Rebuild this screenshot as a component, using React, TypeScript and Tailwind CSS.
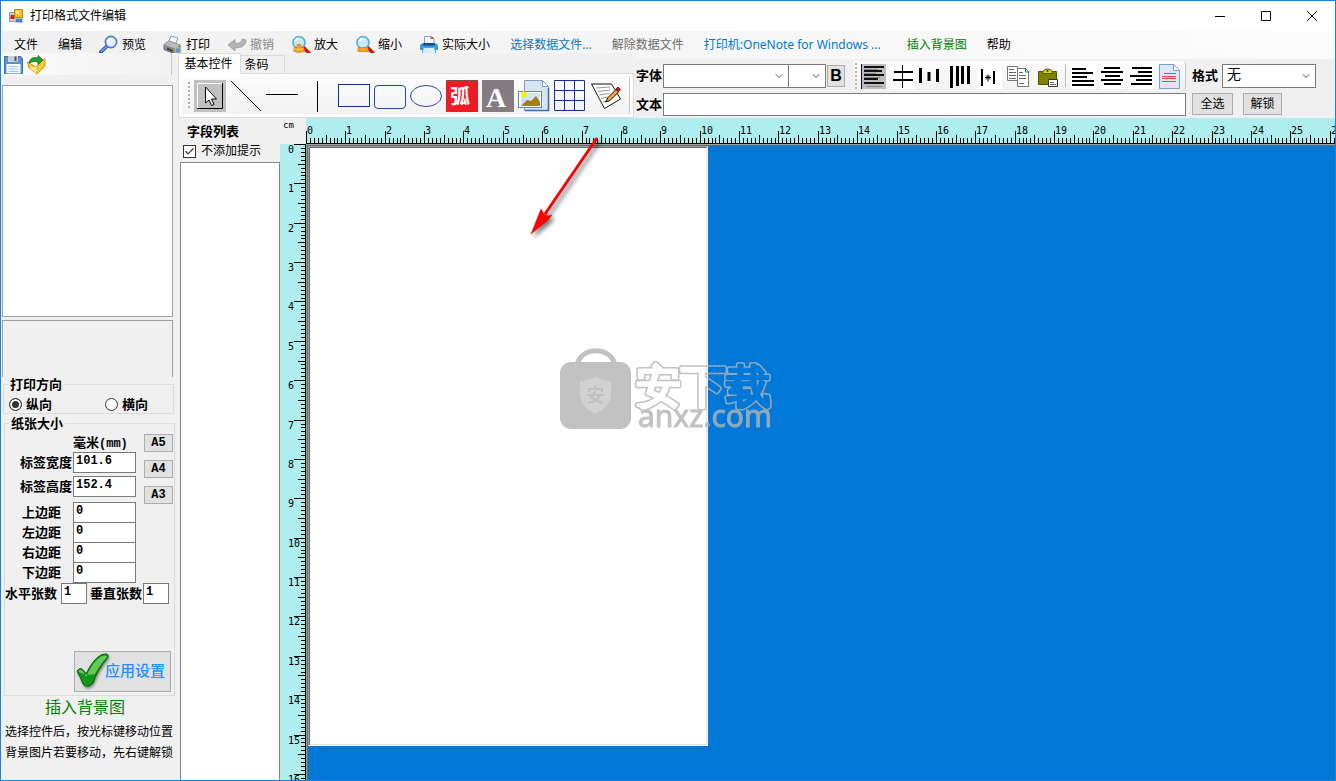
import { useLayoutEffect, useRef, useState } from 'react'
import type { ReactNode } from 'react'
import { Check, ChevronDown } from 'lucide-react'
import clsx from 'clsx'

const CM = 39.37

/* ---------- menu icons ---------- */

function AppIcon() {
  return (
    <svg width="15" height="15" viewBox="0 0 15 15">
      <rect x="0.5" y="3.5" width="7" height="9" fill="#d0d0d0" stroke="#9a9a9a" />
      <rect x="1.5" y="6" width="4" height="4" fill="#c22a1c" />
      <rect x="5.5" y="0.5" width="8" height="8" fill="#f7c325" stroke="#b98a1c" />
      <rect x="7" y="2" width="3" height="3" fill="#fdeb9c" />
      <rect x="6.5" y="9.5" width="7" height="4" fill="#3f7fe0" stroke="#b9c4d6" />
    </svg>
  )
}

function PreviewIcon() {
  return (
    <svg width="20" height="20" viewBox="0 0 20 20">
      <path d="M7.5 11.5 1.5 17.5" stroke="#2b55b5" strokeWidth="3.6" strokeLinecap="round" />
      <path d="M7.5 11.5 2.5 16.5" stroke="#86a9ea" strokeWidth="1.4" strokeLinecap="round" />
      <circle cx="12" cy="7" r="5.6" fill="#e3effc" stroke="#4a78cc" strokeWidth="1.6" />
      <path d="M8.8 6.5a3.6 3.6 0 0 1 3.2-2.8" stroke="#fff" strokeWidth="1.6" fill="none" />
    </svg>
  )
}

function PrinterIcon() {
  return (
    <svg width="20" height="20" viewBox="0 0 20 20">
      <path d="M5 8 8 1l7 2-3 7z" fill="#f2f6fb" stroke="#8ba0b8" />
      <path d="M1 9.5 6 6l11 4v6l-5 3-11-4.5z" fill="#8c8c8c" stroke="#666" />
      <path d="M1 9.5 6 6l11 4-5 3.5z" fill="#bcbcbc" />
      <path d="M4 12.5l6 2.5v2l-6-2.200z" fill="#444" />
      <circle cx="15" cy="15.5" r="3" fill="#5b95dc" stroke="#d7c84c" />
    </svg>
  )
}

function UndoIcon() {
  return (
    <svg width="20" height="20" viewBox="0 0 20 20">
      <path d="M1 10 8 4.500V8c3.500.6 6.500-.4 7.200-4L19 5c.3 5.500-4.500 8.300-11 7.700V16z" fill="#b4b4b4" stroke="#9d9d9d" strokeWidth=".8" />
    </svg>
  )
}

function LensIcon({ plus }: { plus?: boolean }) {
  return (
    <svg width="20" height="20" viewBox="0 0 20 20">
      <path d="M12 12l6 6" stroke="#c8200f" strokeWidth="3.6" strokeLinecap="round" />
      <circle cx="8" cy="7.5" r="6" fill="#c5ebfb" stroke="#58aede" strokeWidth="1.7" />
      <path d="M4.5 6.5A4 4 0 0 1 9 3.8" stroke="#fff" strokeWidth="1.8" fill="none" />
      <path d="M3 12.5h10v4H3z" fill="#f9a01b" stroke="#d97808" strokeWidth=".7" />
      {plus && <path d="M6 9.5h4v10H6z" fill="#f9a01b" stroke="#d97808" strokeWidth=".7" />}
      {plus && <path d="M4 13.2h8v2.600H4z" fill="#fbb53f" />}
    </svg>
  )
}

function ActualSizeIcon() {
  return (
    <svg width="20" height="20" viewBox="0 0 20 20">
      <path d="M5.5 9V1.500h7L15 4v5z" fill="#eef6fd" stroke="#7fa7c8" />
      <rect x="11.5" y="2" width="3" height="2" fill="#e44" />
      <path d="M1 11.5C1 9 2.500 8.500 4 8.500h12c1.500 0 3 .5 3 3V15H1z" fill="#3a9ad8" />
      <rect x="4" y="8" width="12" height="2.5" rx="1" fill="#134f7d" />
      <path d="M4.5 12.5h11l1.500 6H3z" fill="#d9eefa" stroke="#5ba0cf" />
    </svg>
  )
}

function SaveIcon() {
  return (
    <svg width="19" height="20" viewBox="0 0 19 20">
      <path d="M.5 1.500h16.500l1.500 2v15H.5z" fill="#5a92cd" stroke="#3c6ea8" />
      <rect x="4" y="1" width="10" height="6" fill="#c9ced4" />
      <rect x="10.5" y="1.5" width="2" height="4.5" fill="#4d5965" />
      <rect x="2.5" y="9" width="14" height="9.5" fill="#f5fafe" />
      <path d="M4.5 11.500h10M4.500 14h10M4.500 16.500h10" stroke="#9cc2e6" />
    </svg>
  )
}

function OpenIcon() {
  return (
    <svg width="19" height="20" viewBox="0 0 19 20">
      <path d="M.5 7 9 12l8-8 1 0 0 7L10 19 2 13z" fill="#f3c93a" stroke="#c39a1c" />
      <path d="M2 12.500 9.500 12v6.500z" fill="#fbe88a" />
      <path d="M2 8C3 3 7 1.500 11 3V.5L16 5l-5 4.500V7C8 6 5.500 6.500 2 8z" fill="#2a9a2e" stroke="#156c1a" strokeWidth=".8" />
    </svg>
  )
}

/* ---------- shape toolbar ---------- */

const shapeTools: { name: string; icon: ReactNode }[] = [
  {
    name: '选择',
    icon: (
      <>
        <rect width="32" height="32" fill="#c0c0c0" />
        <path d="M3.5 28V3.500H28" stroke="#fff" fill="none" />
        <path d="M3 28.500h25.500V3" stroke="#000" fill="none" />
        <path d="M11.500 7v16l3.500-3 2.500 5.500 2.500-1-2.500-5.500h5z" fill="#fff" stroke="#000" />
      </>
    ),
  },
  { name: '斜线', icon: <path d="M1 1l30 30" stroke="#000" /> },
  { name: '横线', icon: <path d="M0 14.500h32" stroke="#000" /> },
  { name: '竖线', icon: <path d="M15.500 1v31" stroke="#000" /> },
  { name: '矩形', icon: <rect x=".5" y="4.5" width="31" height="22" fill="none" stroke="#10309a" /> },
  { name: '圆角矩形', icon: <rect x=".5" y="5.5" width="31" height="23" rx="3.5" fill="none" stroke="#2b479c" /> },
  { name: '椭圆', icon: <ellipse cx="16" cy="16" rx="15.5" ry="10.5" fill="none" stroke="#2b479c" /> },
  {
    name: '弧形文字',
    icon: (
      <>
        <rect width="32" height="32" fill="#ed1c24" />
        <path d="M0 1h32" stroke="#8a4a3a" strokeWidth="2" />
        <text x="14" y="24" fontSize="20" fontWeight="700" textAnchor="middle" fill="#fff" className="font-['Noto_Sans_CJK_SC',sans-serif]">弧</text>
      </>
    ),
  },
  {
    name: '文字',
    icon: (
      <>
        <rect width="32" height="32" fill="#847c80" />
        <text x="14" y="27" fontSize="28" fontWeight="700" textAnchor="middle" fill="#fff" className="font-['Liberation_Serif',serif]">A</text>
      </>
    ),
  },
  {
    name: '图片',
    icon: (
      <>
        <path d="M6.500.5h18l6 6v24h-24z" fill="#d6e4f4" stroke="#7f9cc4" />
        <path d="M24.500.5v6h6z" fill="#fff" stroke="#7f9cc4" />
        <path d="M30.500 8v22.500H7" stroke="#49699a" strokeWidth="1.6" fill="none" />
        <rect x=".5" y="11.5" width="23" height="16" fill="#fff" stroke="#5f86ba" />
        <rect x="3" y="13" width="19" height="13" fill="#cfe6fa" />
        <path d="M3 26l6-6 4 1 5-5 4 6v4z" fill="#a57f12" />
        <circle cx="6" cy="14.500" r="3" fill="#fff200" />
      </>
    ),
  },
  {
    name: '表格',
    icon: <path d="M.5.5h30v30H.5zM10.500.5v30M20.500.5v30M.5 10.500h30M.5 20.500h30" fill="none" stroke="#10309a" />,
  },
  {
    name: '记事',
    icon: (
      <>
        <path d="M1.500 4h20l9 15-16 9.500z" fill="#fff" stroke="#111" strokeLinejoin="round" />
        <path d="M6 8l14-1M8 11.500l12-1.500M9.500 15l10-1.500M11 18.500l7-1.500M13 22l6-1.500" stroke="#999" />
        <path d="M15.500 22l2.500-4.500L26 9.500l2.500 2.500L20 20.500z" fill="#f0a63a" stroke="#111" />
        <path d="M26 9l2-2 2.500 2.500-2 2z" fill="#d21f1f" stroke="#8a1010" />
      </>
    ),
  },
]

/* ---------- align toolbar ---------- */

const alignTools: { name: string; icon: ReactNode; white?: boolean }[] = [
  {
    name: '左对齐控件',
    icon: (
      <>
        <rect width="25" height="25" fill="#bdbdbd" />
        <path d="M.5 0v25" stroke="#00008b" />
        <path d="M3 3h20M3 7h18M3 11h20M3 15h14M3 19h20" stroke="#111" strokeWidth="2" />
        <path d="M3 5.500h14M3 9.500h12M3 13.500h16M5 22.500h16" stroke="#888" />
      </>
    ),
  },
  {
    name: '水平居中',
    white: true,
    icon: (
      <>
        <path d="M12.500 1v23" stroke="#000" />
        <path d="M4 8h19M3 16h20" stroke="#000" strokeWidth="2" />
      </>
    ),
  },
  { name: '水平等距', icon: <path d="M1.500 4v15M10 8v9M18.500 5v13" stroke="#000" strokeWidth="3" /> },
  { name: '垂直等距', icon: <path d="M3.500 2v22M9.500 2v20M14.500 2v18M20.500 2v18" stroke="#000" strokeWidth="3" /> },
  {
    name: '间距',
    white: true,
    icon: (
      <>
        <path d="M5 5v17M17 7v13" stroke="#000" strokeWidth="2" />
        <path d="M8 13.500h6M11 10.500v7M9 11.500l4 4M13 11.500l-4 4" stroke="#000" />
      </>
    ),
  },
  {
    name: '复制',
    icon: (
      <>
        <path d="M1.500 2.500h10v14h-10zM11.500 4.500h8l3 3v15h-11z" fill="#fff" stroke="#777" />
        <path d="M3 5.500h5M3 8.500h7M3 11.500h7M3 14.500h7M13 8.500h4M13 11.500h7M13 14.500h7M13 19.500h5" stroke="#666" />
        <path d="M19.500 4v4h4" fill="none" stroke="#0a7a7a" />
      </>
    ),
  },
  {
    name: '粘贴',
    icon: (
      <>
        <path d="M3.500 7.500h18v13h-18z" fill="#808000" stroke="#555500" />
        <path d="M7.500 9.500c0-6 10-6 10 0z" fill="#e5d800" stroke="#444" />
        <circle cx="12.500" cy="7" r="1" fill="#222" />
        <path d="M13.500 15.500h9v7h-9z" fill="#fff" stroke="#333" />
        <path d="M15 18.500h4M15 20.500h6" stroke="#666" />
      </>
    ),
  },
]

const textTools: { name: string; icon: ReactNode; white?: boolean }[] = [
  { name: '文本左对齐', white: true, icon: <path d="M1 5h14M1 9h21M1 13h15M1 17h22M1 21h22" stroke="#000" strokeWidth="2" /> },
  { name: '文本居中', white: true, icon: <path d="M4 4h16M1 8h22M5 12h15M1 16h22M4 20h17" stroke="#000" strokeWidth="2" /> },
  { name: '文本右对齐', white: true, icon: <path d="M3 4h20M9 8h14M1 12h22M7 16h16M2 20h21" stroke="#000" strokeWidth="2" /> },
  {
    name: '页面',
    icon: (
      <>
        <path d="M1.500.5h14l6 6v18h-20z" fill="#dde8f6" stroke="#7d9cc8" />
        <path d="M15.500.5v6h6z" fill="#fff" stroke="#7d9cc8" />
        <path d="M6 9.500h12M4 12.500h14M4 14.500h14M4 17.500h14" stroke="#e04848" />
      </>
    ),
  },
]

function Grip() {
  return (
    <svg width="2" height="27" viewBox="0 0 2 27" className="shrink-0">
      <path d="M1 0v27" stroke="#b4b4b4" strokeWidth="2" strokeDasharray="2 2" />
    </svg>
  )
}

function ToolButton({ name, icon, white, small }: { name: string; icon: ReactNode; white?: boolean; small?: boolean }) {
  return (
    <button type="button" aria-label={name} className={clsx('block shrink-0', white && 'bg-white')}>
      {small ? (
        <svg width="25" height="25" viewBox="0 0 25 25">{icon}</svg>
      ) : (
        <svg width="32" height="32" viewBox="0 0 32 32">{icon}</svg>
      )}
    </button>
  )
}

function Combo({ id, className, options, label }: { id: string; className: string; options: string[]; label?: string }) {
  return (
    <div className={clsx('relative h-6', className)}>
      <select id={id} aria-label={label} className="h-full w-full appearance-none border border-[#7a7a7a] bg-white pl-1 pb-1 text-sm leading-4">
        {options.map(o => <option key={o}>{o}</option>)}
      </select>
      <ChevronDown className="pointer-events-none absolute right-1 top-1.5 h-3 w-3 text-[#555]" strokeWidth={2} />
    </div>
  )
}

/* ---------- rulers ---------- */

// length is the ruler's own size along its axis, so only visible marks are drawn
function useTicks(axis: 'x' | 'y') {
  const ref = useRef<HTMLDivElement>(null)
  const [length, setLength] = useState(0)
  useLayoutEffect(() => {
    const el = ref.current
    if (!el) return
    const measure = () => setLength(axis === 'x' ? el.clientWidth : el.clientHeight)
    measure()
    window.addEventListener('resize', measure)
    return () => window.removeEventListener('resize', measure)
  }, [axis])
  const count = Math.ceil((length * 10) / CM)
  const ticks = Array.from({ length: count }, (_, i) => ({
    i,
    pos: Math.round((i * CM) / 10),
    len: i % 10 === 0 ? 12 : i % 5 === 0 ? 8 : 5,
  }))
  return { ref, ticks }
}

function HorizontalRuler() {
  const { ref, ticks } = useTicks('x')
  return (
    <div ref={ref} className="min-w-0 overflow-hidden">
      <svg className="h-full w-full bg-[#afeeee]">
        <g shapeRendering="crispEdges">
          {ticks.map(t => <rect key={t.i} x={t.pos} y={25 - t.len} width="1" height={t.len} />)}
          <rect x="0" y="25" width="100%" height="1" />
        </g>
        {ticks.filter(t => t.i % 10 === 0).map(t => (
          <text key={t.i} x={t.pos + 1} y="16" fontSize="10">{t.i / 10}</text>
        ))}
      </svg>
    </div>
  )
}

function VerticalRuler() {
  const { ref, ticks } = useTicks('y')
  return (
    <div ref={ref} className="min-h-0 overflow-hidden">
      <svg className="h-full w-full bg-[#afeeee]">
        <g shapeRendering="crispEdges">
          {ticks.map(t => <rect key={t.i} x={26 - t.len} y={t.pos} width={t.len} height="1" />)}
          <rect x="25" y="0" width="1" height="100%" />
        </g>
        {ticks.filter(t => t.i % 10 === 0).map(t => (
          <text key={t.i} x="8" y={t.pos + 9} fontSize="10">{t.i / 10}</text>
        ))}
      </svg>
    </div>
  )
}

/* ---------- canvas overlays ---------- */

function Arrow() {
  return (
    <svg className="pointer-events-none absolute -top-2 left-[220px] overflow-visible" width="72" height="104" viewBox="0 0 72 104">
      <g className="drop-shadow-[3px_3px_2px_rgba(0,0,0,0.5)]">
        <path d="M69 0 17 76" stroke="#f00" strokeWidth="3" />
        <path d="M3 96 13 71l3 5 4 2 4-1-5 6z" fill="#f00" stroke="#d00" strokeWidth=".5" />
      </g>
    </svg>
  )
}

function Watermark() {
  return (
    <svg className="pointer-events-none absolute left-[252px] top-[202px]" width="220" height="86" viewBox="0 0 220 86">
      <defs>
        <mask id="outline">
          <text x="76" y="54" fontSize="45" fontWeight="400" stroke="#fff" strokeWidth="6" strokeLinejoin="round" fill="#fff">安下载</text>
          <text x="76" y="54" fontSize="45" fontWeight="400" stroke="#000" strokeWidth="3" strokeLinejoin="round" fill="#000">安下载</text>
        </mask>
      </defs>
      <g className="font-['Noto_Sans_CJK_SC',sans-serif]" opacity=".8">
        <path d="M17 17C21 -2 51 -2 55 17" fill="none" stroke="#b4b4b4" strokeWidth="5" />
        <rect x="0" y="14" width="71" height="67" rx="11" fill="#b4b4b4" />
        <path d="M20 33q9-1 15-4 7 3 16 4v14q-1 12-16 19-14-7-15-19z" fill="#c6c6c6" />
        <text x="35.500" y="54" fontSize="18" fontWeight="700" textAnchor="middle" fill="#b0b0b0">安</text>
        <rect x="70" y="5" width="150" height="62" fill="#b4b4b4" mask="url(#outline)" />
        <text x="78" y="79" fontSize="30" fill="#b4b4b4" stroke="#b4b4b4" className="font-['Noto_Sans',sans-serif]">anxz.com</text>
      </g>
    </svg>
  )
}

/* ---------- left panel ---------- */

const inputCls = "h-[21px] border border-[#7a7a7a] bg-white px-0.5 pb-1 font-['Liberation_Mono',monospace] text-xs leading-4 font-bold"
const buttonCls = 'border border-[#adadad] bg-[#e1e1e1]'

const margins = [
  { id: 'top', label: '上边距' },
  { id: 'left', label: '左边距' },
  { id: 'right', label: '右边距' },
  { id: 'bottom', label: '下边距' },
]

function PaperSettings() {
  return (
    <fieldset className="ml-[3px] mt-0.5 h-[280px] w-[171px] border border-[#dcdcdc] text-[13px] font-bold">
      <legend className="ml-1 px-0.5 leading-[14px]">纸张大小</legend>
      <div className="flex">
        <div className="w-[131px] pt-[3px]">
          <p className="h-[19px] pl-[68px] leading-[19px]">
            毫米<span className="font-['Liberation_Mono',monospace] text-xs">(mm)</span>
          </p>
          <div className="flex items-center justify-end gap-px">
            <label htmlFor="w">标签宽度</label>
            <input id="w" defaultValue="101.6" className={clsx(inputCls, 'w-[63px]')} />
          </div>
          <div className="mt-[3px] flex items-center justify-end gap-px">
            <label htmlFor="h">标签高度</label>
            <input id="h" defaultValue="152.4" className={clsx(inputCls, 'w-[63px]')} />
          </div>
          <div className="mt-[5px] pb-px">
            {margins.map(m => (
              <div key={m.id} className="-mb-px flex items-center justify-end gap-3">
                <label htmlFor={m.id}>{m.label}</label>
                <input id={m.id} defaultValue="0" className={clsx(inputCls, 'w-[63px]')} />
              </div>
            ))}
          </div>
        </div>
        <div className="ml-2 flex flex-col gap-2 pt-1">
          {['A5', 'A4', 'A3'].map(s => (
            <button key={s} type="button" className={clsx(buttonCls, "h-[18px] w-[29px] font-['Liberation_Mono',monospace] text-xs leading-4")}>{s}</button>
          ))}
        </div>
      </div>
      <div className="flex items-center">
        <label htmlFor="cols">水平张数</label>
        <input id="cols" defaultValue="1" className={clsx(inputCls, 'ml-1 w-[26px]')} />
        <label htmlFor="rows" className="ml-[3px]">垂直张数</label>
        <input id="rows" defaultValue="1" className={clsx(inputCls, 'ml-px w-[26px]')} />
      </div>
      <button type="button" className={clsx(buttonCls, 'ml-[69px] mt-[47px] flex h-[41px] w-[97px] items-center pl-0.5 pb-1 text-[15px] font-medium text-[#1e90ff]')}>
        <svg width="28" height="36" viewBox="0 0 28 36" className="shrink-0 overflow-visible">
          <g className="drop-shadow-[1px_2px_1px_rgba(0,0,0,0.4)]">
            <path d="M0 19q4-6 9 3 7-15 15-19 8-3 7 2-11 13-15 26-6 6-10 1-2-6-6-13z" fill="#0d9a14" stroke="#0a5a0c" />
            <path d="M1 19q4-4 8 6 7-16 16-21 5-1 5 1-8 9-12 17-7 2-14-1z" fill="#7ed46c" opacity=".8" />
          </g>
        </svg>
        应用设置
      </button>
    </fieldset>
  )
}

function LeftPanel() {
  const [dir, setDir] = useState('纵向')
  return (
    <aside className="flex w-[177px] shrink-0 flex-col">
      <div className="flex h-[22px] w-[171px] items-end gap-1 border-r border-[#c8c8c8] bg-gradient-to-r from-[#fafafa] to-[#f2f2f2] pl-[3px]">
        <button type="button" aria-label="保存"><SaveIcon /></button>
        <button type="button" aria-label="打开"><OpenIcon /></button>
      </div>
      <div className="ml-px mt-2.5 h-[232px] w-[171px] border border-[#a0a0a0] bg-white" />
      <div className="ml-px mt-[3px] h-[57px] w-[171px] border border-b-0 border-[#a0a0a0]" />
      <fieldset className="ml-0.5 h-[37px] w-[171px] border border-[#dcdcdc] text-[13px] font-bold">
        <legend className="ml-1 px-0.5 leading-[14px]">打印方向</legend>
        <div className="flex gap-[53px] pl-[5px] pt-1">
          {['纵向', '横向'].map(d => (
            <label key={d} className="flex items-center gap-1 leading-[18px]">
              <input
                type="radio"
                name="direction"
                checked={dir === d}
                onChange={() => setDir(d)}
                className="h-[13px] w-[13px] appearance-none rounded-full border border-[#333] bg-white checked:bg-[#333] checked:shadow-[inset_0_0_0_2px_white]"
              />
              {d}
            </label>
          ))}
        </div>
      </fieldset>
      <PaperSettings />
      <button type="button" className="ml-11 self-start text-base leading-[22px] text-[#008000]">插入背景图</button>
      <p className="mt-[3px] whitespace-nowrap pl-1 leading-[21px]">
        选择控件后，按光标键移动位置<br />背景图片若要移动，先右键解锁
      </p>
    </aside>
  )
}

/* ---------- top bars ---------- */

const menus: { label: string; icon?: ReactNode; color?: string; wide?: boolean }[] = [
  { label: '文件' },
  { label: '编辑' },
  { label: '预览', icon: <PreviewIcon /> },
  { label: '打印', icon: <PrinterIcon /> },
  { label: '撤销', icon: <UndoIcon />, color: 'text-[#8a8a8a]' },
  { label: '放大', icon: <LensIcon plus /> },
  { label: '缩小', icon: <LensIcon /> },
  { label: '实际大小', icon: <ActualSizeIcon /> },
  { label: '选择数据文件...', color: 'text-[#0078d7]' },
  { label: '解除数据文件', color: 'text-[#6d6d6d]' },
  { label: '打印机:OneNote for Windows ...', color: 'text-[#0078d7]', wide: true },
  { label: '插入背景图', color: 'text-[#008000]' },
  { label: '帮助' },
]

function ShapeTabs() {
  return (
    <div className="w-[456px] shrink-0">
      <div className="flex h-5 items-end" role="tablist">
        <button type="button" role="tab" aria-selected="true" className="relative z-10 -mb-px h-[21px] w-[63px] border border-b-0 border-[#dcdcdc] bg-white pr-0.5">基本控件</button>
        <button type="button" role="tab" aria-selected="false" className="h-[18px] w-11 border border-b-0 border-l-0 border-[#dcdcdc] pr-3">条码</button>
      </div>
      <div className="h-[45px] border border-[#dcdcdc] bg-white p-[3px]">
        <div className="flex h-[37px] items-center gap-1 border-r border-[#c8c8c8] bg-gradient-to-b from-[#fcfcfc] to-[#f2f2f2] pl-1.5">
          <Grip />
          {shapeTools.map(t => <ToolButton key={t.name} {...t} />)}
        </div>
      </div>
    </div>
  )
}

function FontBar() {
  return (
    <div className="ml-0.5 min-w-0 flex-1">
      <div className="h-1.5 bg-gradient-to-r from-[#f6f6f6] to-[#fbfbfb]" />
      <div className="flex">
        <div className="w-[550px] shrink-0">
          <div className="flex h-[34px] items-center">
            <label htmlFor="font" className="w-[27px] shrink-0 text-[13px] font-bold">字体</label>
            <Combo id="font" className="w-[126px]" options={['']} />
            <Combo id="size" label="字号" className="-ml-px w-[38px]" options={['']} />
            <button type="button" className={clsx(buttonCls, "ml-px h-[22px] w-[18px] font-['Liberation_Sans',sans-serif] text-base leading-5 font-bold")}>B</button>
            <div className="ml-2 flex h-[30px] flex-1 items-center gap-1 rounded-sm border-r border-[#c8c8c8] bg-gradient-to-b from-[#fcfcfc] to-[#f2f2f2] pl-0.5">
              <Grip />
              {alignTools.map(t => <ToolButton key={t.name} small {...t} />)}
              <span className="mx-px h-[22px] w-px bg-[#bdbdbd]" />
              {textTools.map(t => <ToolButton key={t.name} small {...t} />)}
            </div>
          </div>
          <div className="flex items-center">
            <label htmlFor="text" className="w-[27px] shrink-0 text-[13px] font-bold">文本</label>
            <input id="text" className="h-[23px] w-full border border-[#7a7a7a] bg-white px-1" />
          </div>
        </div>
        <div className="ml-1.5">
          <div className="flex h-[34px] items-center gap-1">
            <label htmlFor="format" className="text-[13px] font-bold">格式</label>
            <Combo id="format" className="w-[94px]" options={['无']} />
          </div>
          <div className="flex gap-2.5">
            <button type="button" className={clsx(buttonCls, 'h-[22px] w-[41px]')}>全选</button>
            <button type="button" className={clsx(buttonCls, 'h-[22px] w-[39px]')}>解锁</button>
          </div>
        </div>
      </div>
    </div>
  )
}

const windowButtons = [
  { name: '最小化', d: 'M0 5.500h10' },
  { name: '最大化', d: 'M.5.5h9v9h-9z' },
  { name: '关闭', d: 'M0 0l10 10M10 0L0 10' },
]

export default function App() {
  return (
    <div className="flex h-screen flex-col overflow-hidden border border-[#1883d7] bg-[#f0f0f0] font-['Noto_Sans','Noto_Sans_CJK_SC',sans-serif] text-xs text-black">
      <header className="flex h-[30px] shrink-0 items-center bg-white pl-2">
        <AppIcon />
        <h1 className="ml-1.5 flex-1">打印格式文件编辑</h1>
        {windowButtons.map(b => (
          <button key={b.name} type="button" aria-label={b.name} className="flex w-[46px] justify-center">
            <svg width="10" height="10" viewBox="0 0 10 10" fill="none" stroke="#000"><path d={b.d} /></svg>
          </button>
        ))}
      </header>

      <nav className="flex h-[22px] shrink-0 items-start overflow-hidden bg-gradient-to-r from-[#f0f0f0] to-[#fcfcfc] pl-[3px] pt-[5px]">
        {menus.map(m => (
          <button
            key={m.label}
            type="button"
            className={clsx('flex h-[17px] shrink-0 items-center gap-[3px] pr-2.5 leading-[17px] whitespace-nowrap', m.icon ? 'pl-[7px]' : 'pl-2.5', m.wide && 'min-w-[203px]', m.color)}
          >
            {m.icon}
            {m.label}
          </button>
        ))}
      </nav>

      <div className="flex min-h-0 flex-1">
        <LeftPanel />
        <main className="flex min-w-0 flex-1 flex-col">
          <div className="flex h-[65px] shrink-0">
            <ShapeTabs />
            <FontBar />
          </div>

          <div className="flex min-h-0 flex-1">
            <section className="ml-0.5 flex w-[100px] shrink-0 flex-col">
              <h2 className="pl-[7px] pt-1 text-[13px] leading-[18px] font-bold">字段列表</h2>
              <label className="flex h-[22px] items-center gap-[5px] pl-[3px] whitespace-nowrap">
                <span className="relative h-[13px] w-[13px]">
                  <input type="checkbox" defaultChecked className="peer block h-[13px] w-[13px] appearance-none border border-[#333] bg-white" />
                  <Check className="pointer-events-none absolute left-px top-px hidden h-[11px] w-[11px] text-[#333] peer-checked:block" strokeWidth={2.5} />
                </span>
                不添加提示
              </label>
              <div className="min-h-0 flex-1 border border-b-0 border-[#828790] bg-white" />
            </section>

            <div className="grid min-w-0 flex-1 grid-cols-[26px_1fr] grid-rows-[26px_1fr] overflow-hidden font-['DejaVu_Sans_Mono',monospace]">
              <span className="pl-[3px] text-[9px] leading-[14px]">cm</span>
              <HorizontalRuler />
              <VerticalRuler />
              <div className="min-h-0 min-w-0 border-t border-l border-[#a0a0a0]">
                <div className="relative h-full border-t border-l border-[#696969] bg-[#0078d7]">
                  <div className="h-[600px] w-[400px] border border-[#a0a0a0] border-r-white border-b-white bg-white shadow-[inset_1px_1px_0_#696969,inset_-1px_-1px_0_#e3e3e3]" />
                  <Arrow />
                  <Watermark />
                </div>
              </div>
            </div>
          </div>
        </main>
      </div>
    </div>
  )
}
